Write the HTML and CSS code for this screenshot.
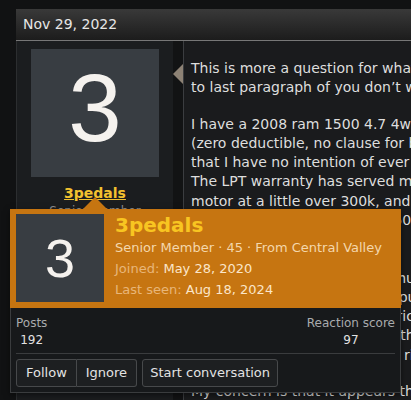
FILE: index.html
```html
<!DOCTYPE html>
<html lang="en">
<head>
    <meta charset="UTF-8">
    <meta name="viewport" content="width=device-width, initial-scale=1.0">
    <title>Lifetime powertrain warranty question</title>
    <link rel="stylesheet" href="styles.css">
</head>
<body>

<div class="page">
    <div class="block-header">Nov 29, 2022</div>

    <article class="post">
        <div class="post-user">
            <div class="avatar avatar-lg">3</div>
            <a class="username" href="#">3pedals</a>
            <div class="user-title">Senior Member</div>
        </div>

        <div class="post-main">
            <div class="post-body">
                <p>This is more a question for whatever reason, but skip<br>
                to last paragraph of you don’t want the back story.</p>
                <p>I have a 2008 ram 1500 4.7 4wd with the lifetime powertrain<br>
                (zero deductible, no clause for bumper to bumper) warranty<br>
                that I have no intention of ever getting rid of, so I keep it.<br>
                The LPT warranty has served me well, it has replaced the<br>
                motor at a little over 300k, and replaced<br>
                the transmission at around 350k. It now has 412k<br>
                and it still runs great.<br>
                No leaks, no noises.<br>
                Last month the dealer said I must replace the<br>
                rear main seal and the water pump, everything<br>
                else looks good and the electrical is all fine.<br>
                The repair was approved and the shop is waiting<br>
                on a part that is on backorder right now.</p>
                <p>My concern is that it appears the warranty company is closing.</p>
            </div>
        </div>
    </article>

    <!-- member card opened from the username -->
    <div class="member-tooltip">
        <div class="tooltip-head">
            <div class="avatar avatar-md">3</div>
            <div class="tooltip-info">
                <h3 class="tooltip-name">3pedals</h3>
                <div class="tooltip-line tooltip-blurb">Senior Member · 45 · From Central Valley</div>
                <div class="tooltip-line"><span class="label">Joined:</span> May 28, 2020</div>
                <div class="tooltip-line"><span class="label">Last seen:</span> Aug 18, 2024</div>
            </div>
        </div>
        <div class="tooltip-body">
            <div class="stats">
                <dl><dt>Posts</dt><dd>192</dd></dl>
                <dl><dt>Reaction score</dt><dd>97</dd></dl>
            </div>
            <div class="actions">
                <div class="btn-group">
                    <a class="btn" href="#">Follow</a>
                    <a class="btn" href="#">Ignore</a>
                </div>
                <a class="btn btn-wide" href="#">Start conversation</a>
            </div>
        </div>
    </div>
</div>

</body>
</html>
```

FILE: styles.css
```css
/* General Styles */
body {
    margin: 0;
    background: #111213;
    color: #dedede;
    font-family: "DejaVu Sans", Verdana, sans-serif;
    overflow: hidden;
}

a {
    text-decoration: none;
}

.page {
    position: relative;
    width: 640px;
    padding: 9px 0 0 16px;
}

.block-header {
    height: 31px;
    line-height: 31px;
    padding-left: 7px;
    font-size: 14px;
    color: #e6e6e6;
    background: linear-gradient(#393939, #1c1c1c);
    border-bottom: 1px solid #777;
}

/* Post */
.post {
    display: flex;
    min-height: 380px;
    background: #121314;
}

.post-user {
    width: 156px;
    padding-top: 8px;
    background: #1b1d1f;
    border-left: 1px solid #2c2e30;
    text-align: center;
}

.avatar {
    background: #383d42;
    color: #f5f2ee;
    font-family: "Liberation Sans", Arial, sans-serif;
    text-align: center;
}

.avatar-lg {
    width: 128px;
    height: 128px;
    margin: 0 auto;
    font-size: 96px;
    line-height: 118px;
}

.username {
    display: block;
    margin-top: 7px;
    font-size: 14px;
    line-height: 18px;
    font-weight: bold;
    color: #f3c12f;
    text-decoration: underline;
}

.user-title {
    margin-top: 1px;
    font-size: 12px;
    line-height: 17px;
    color: #8f8f8f;
}

.post-main {
    position: relative;
    flex: 1;
    margin-left: 10px;
    background: #1a1b1d;
    border-left: 1px solid #3b3d40;
}

.post-main::before {
    content: "";
    position: absolute;
    left: -11px;
    top: 23px;
    border: 10px solid transparent;
    border-left-width: 0;
    border-right-color: #8d8275;
}

.post-body {
    padding: 18px 0 0 7px;
    font-size: 14px;
    line-height: 1.375;
    white-space: nowrap;
}

.post-body p {
    margin: 0 0 17px;
}

/* Member tooltip */
.member-tooltip {
    position: absolute;
    left: 10px;
    top: 209px;
    width: 391px;
    box-shadow: 0 2px 6px rgba(0, 0, 0, 0.5);
}

.member-tooltip::before {
    content: "";
    position: absolute;
    left: 73px;
    top: -12px;
    border: 12px solid transparent;
    border-top-width: 0;
    border-bottom-color: #c67511;
}

.tooltip-head {
    display: flex;
    gap: 11px;
    padding: 5px 6px 6px;
    background: #c67511;
}

.avatar-md {
    flex-shrink: 0;
    width: 88px;
    height: 88px;
    font-size: 54px;
    line-height: 88px;
}

.tooltip-name {
    margin: -1px 0 0;
    font-size: 20px;
    line-height: 24px;
    color: #f8c521;
}

.tooltip-line {
    margin-top: 1px;
    font-size: 13px;
    line-height: 20px;
    color: #fbe6c9;
}

.tooltip-blurb {
    color: #f4d7ac;
}

.tooltip-line .label {
    color: #e8b679;
}

.tooltip-body {
    padding: 7px 5px 5px;
    background: #17191b;
    border: 1px solid #3a3c3e;
    border-top: none;
}

.stats {
    display: flex;
    justify-content: space-between;
    padding-bottom: 4px;
    border-bottom: 1px solid #3a3c3e;
}

.stats dl {
    margin: 0;
    text-align: center;
    font-size: 12px;
    line-height: 17px;
}

.stats dt {
    color: #a9abad;
}

.stats dd {
    margin: 0;
    color: #e2e2e2;
}

.actions {
    display: flex;
    gap: 5px;
    margin-top: 5px;
}

.btn-group {
    display: flex;
}

.btn {
    box-sizing: border-box;
    height: 28px;
    padding: 0 9px;
    line-height: 26px;
    font-size: 13px;
    color: #e3e3e3;
    background: #1d1f21;
    border: 1px solid #47494b;
    border-radius: 3px;
}

.btn-wide {
    padding: 0 7px;
}

.btn-group .btn:first-child {
    border-radius: 3px 0 0 3px;
}

.btn-group .btn:last-child {
    border-left: none;
    border-radius: 0 3px 3px 0;
}
```
